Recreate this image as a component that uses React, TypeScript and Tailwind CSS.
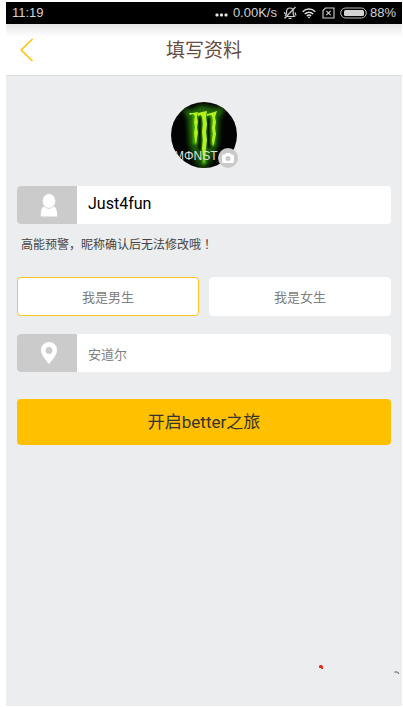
import { useState } from "react";

function StatusBar() {
  return (
    <div className="flex h-[22px] items-center justify-between bg-black px-1.5 font-['Liberation_Sans',Arial,sans-serif] text-[13px] leading-4 text-[#d2d2d2]">
      <span>11:19</span>
      <div className="flex items-center">
        <svg width="13" height="4" viewBox="0 0 13 4" className="mt-1" fill="#e6e6e6">
          <rect x="0.5" y="0.5" width="3" height="3" rx="1" />
          <rect x="5" y="0.5" width="3" height="3" rx="1" />
          <rect x="9.5" y="0.5" width="3" height="3" rx="1" />
        </svg>
        <span className="ml-[5px]">0.00K/s</span>
        <svg width="14" height="14" viewBox="0 0 14 14" className="ml-1.5" fill="none" stroke="#d0d0d0" strokeWidth="1.2">
          <path d="M3.500 10.500h8L10.200 8.500V5.500C10.200 3.300 9 2 7 2 4.800 2 3.600 3.400 3.500 5.500V8L2 10M5.500 12.300h3" />
          <path d="M12.500 1 1.500 12.500" />
          <path d="M1 6.500l1.500 1.500M12 6.500l1 3" />
        </svg>
        <svg width="14" height="12" viewBox="0 0 14 12" className="ml-[5px]" fill="none" stroke="#dadada" strokeWidth="1.5">
          <path d="M0.700 4.700C4.300 1.100 9.700 1.100 13.300 4.700" />
          <path d="M2.800 7c2.400-2.400 6-2.400 8.400 0" />
          <path d="M4.900 9c1.200-1.200 3-1.200 4.200 0" />
          <path d="M5.500 9.700 7 11.400l1.500-1.700Z" fill="#dadada" stroke="none" />
        </svg>
        <svg width="13" height="12" viewBox="0 0 13 12" className="ml-1.5" fill="none" stroke="#d0d0d0" strokeWidth="1.1">
          <path d="M3.500 1h8.500v10H1V3.500Z" />
          <path d="m4.300 3.800 4.400 4.400m0-4.400-4.400 4.400" />
        </svg>
        <svg width="27" height="12" viewBox="0 0 27 12" className="ml-[5px]">
          <rect x="0.700" y="1" width="25.600" height="10" rx="5" fill="none" stroke="#bdbdbd" />
          <rect x="4" y="3" width="20" height="6" rx="1.500" fill="#d4d4d4" />
        </svg>
        <span className="ml-[3px]">88%</span>
      </div>
    </div>
  );
}

function Avatar() {
  return (
    <button type="button" aria-label="更换头像" className="relative block size-[66px]">
      <svg width="66" height="66" viewBox="0 0 66 66">
        <defs>
          <clipPath id="round"><circle cx="33" cy="33" r="33" /></clipPath>
          <linearGradient id="beam" x1="0" y1="0" x2="0" y2="1">
            <stop offset="0" stopColor="#2c8208" />
            <stop offset="0.350" stopColor="#2a8a0a" />
            <stop offset="1" stopColor="#184f06" />
          </linearGradient>
          <filter id="haze" x="-30%" y="-30%" width="160%" height="160%"><feGaussianBlur stdDeviation="2.500" /></filter>
          <filter id="soft" x="-60%" y="-30%" width="220%" height="160%"><feGaussianBlur stdDeviation="1.200" /></filter>
        </defs>
        <g clipPath="url(#round)">
          <rect width="66" height="66" fill="#030303" />
          <path d="M11 6 21 8 30 3 44 6 55 5 48 17 47 42 40 60 32 70 24 60 18 42 17 17Z" fill="url(#beam)" opacity="0.800" filter="url(#haze)" />
          <path d="M29 16V48M37.500 16V46" stroke="#051103" strokeWidth="3.500" filter="url(#soft)" />
          <path d="M24 11V42M33 11V62M42 11V43" fill="none" stroke="#48b40a" strokeWidth="4" filter="url(#soft)" />
          <g fill="#b4f01c">
            <path d="M18 11h4l5-1-1 5 1 5-1 5 1 6-1 5-1 7-1-5-1-7 1-6-1-5 1-6-2-2-3 1Z" />
            <path d="M27 11l4-1 5-1-1 6 1 7-1 8 1 8-1 8-1 8-1 7-1-7-1-8 1-8-1-8 1-8-1-7-1-2-3 1Z" />
            <path d="M36 12l4-1 6-2-2 6 1 5-1 6 1 6-1 5-2 8-1-7 1-6-1-6 1-7-1-5-2-1-3 1Z" />
          </g>
          <text x="3" y="58" fontSize="12" fontFamily="Liberation Sans, sans-serif" fill="#dfe2dc">MΦNST</text>
        </g>
      </svg>
      <span className="absolute -right-px bottom-0 flex size-5 items-center justify-center rounded-full bg-[#c9c9c9]">
        <svg width="12" height="10" viewBox="0 0 12 10">
          <path fill="#fff" fillRule="evenodd" d="M1.500 1.500H3L4 0h4l1 1.500h1.500A1.500 1.500 0 0 1 12 3v5.500A1.500 1.500 0 0 1 10.500 10h-9A1.500 1.500 0 0 1 0 8.500V3a1.500 1.500 0 0 1 1.500-1.500ZM6 3a2.500 2.500 0 1 0 0 5 2.500 2.500 0 0 0 0-5Z" />
        </svg>
      </span>
    </button>
  );
}

function PersonIcon() {
  return (
    <svg width="18" height="24" viewBox="0 0 18 24" fill="#fff">
      <ellipse cx="9" cy="8" rx="6.300" ry="7" />
      <path d="M4.500 13.500C2 14.300.8 16 .8 23.500h16.400c0-7.500-1.200-9.200-3.700-10-2.300 3-6.700 3-9 0Z" />
    </svg>
  );
}

function PinIcon() {
  return (
    <svg width="18" height="24" viewBox="0 0 18 24">
      <path fill="#fff" fillRule="evenodd" d="M9 1a8 8 0 0 0-8 8c0 5.500 5 10 8 14 3-4 8-8.500 8-14a8 8 0 0 0-8-8Zm0 5a3.400 3.400 0 1 1 0 6.800A3.400 3.400 0 0 1 9 6Z" />
    </svg>
  );
}

const genders = ["我是男生", "我是女生"];

export default function App() {
  const [name, setName] = useState("Just4fun");
  const [gender, setGender] = useState(genders[0]);

  return (
    <div className="min-h-screen bg-white pt-0.5 pr-px pb-px pl-1.5 font-[Roboto,'Noto_Sans_CJK_SC',sans-serif]">
      <div className="flex min-h-[calc(100vh-3px)] flex-col bg-[#ebedef]">
        <StatusBar />
        <header className="grid h-[52px] grid-cols-[44px_1fr_44px] items-center border-b border-[#d9dbdd] bg-linear-to-b from-[#e6e6e6] to-white to-[13px]">
          <button type="button" aria-label="返回" className="flex h-full items-center pl-3.5">
            <svg width="14" height="24" viewBox="0 0 14 24" fill="none" stroke="#ffc000" strokeWidth="1.500">
              <path d="M12.500 1 1.200 12l11.300 11" />
            </svg>
          </button>
          <h1 className="pt-0.5 text-center text-[19px] leading-6 text-[#654b40]">填写资料</h1>
        </header>

        <main className="grow px-[11px] pt-[26px]">
          <form onSubmit={(e) => e.preventDefault()}>
            <div className="flex justify-center">
              <Avatar />
            </div>

            <div className="mt-[18px] flex h-[38px] overflow-hidden rounded-[4px] bg-white">
              <label htmlFor="nickname" aria-label="昵称" className="flex w-[60px] shrink-0 items-center justify-center bg-[#cbcbcb] pl-1">
                <PersonIcon />
              </label>
              <input
                id="nickname"
                value={name}
                onChange={(e) => setName(e.target.value)}
                className="min-w-0 grow px-[11px] pb-0.5 text-base text-black outline-none"
              />
            </div>
            <p className="mt-[11px] h-[18px] pl-1 text-xs leading-[18px] text-[#444]">
              高能预警，昵称确认后无法修改哦<span className="font-['Noto_Sans_CJK_TC',sans-serif]" lang="zh-TW">！</span>
            </p>

            <fieldset className="mt-6 grid grid-cols-2 gap-2.5">
              {genders.map((g) => (
                <label
                  key={g}
                  className="flex h-[39px] items-center justify-center rounded-[4px] border border-white bg-white pt-0.5 text-[13px] text-[#808080] has-checked:border-[#ffc31f]"
                >
                  <input type="radio" name="gender" checked={gender === g} onChange={() => setGender(g)} className="sr-only" />
                  {g}
                </label>
              ))}
            </fieldset>

            <div className="mt-[18px] flex h-[38px] overflow-hidden rounded-[4px] bg-white">
              <label htmlFor="region" aria-label="地区" className="flex w-[60px] shrink-0 items-center justify-center bg-[#cbcbcb] pl-1">
                <PinIcon />
              </label>
              <select id="region" className="min-w-0 grow appearance-none px-[11px] pt-1 text-[13px] text-[#808080] outline-none">
                <option>安道尔</option>
              </select>
            </div>

            <button type="submit" className="mt-[27px] h-[46px] w-full rounded-[4px] bg-[#ffc000] pt-0.5 text-[17px] text-[#333]">
              开启better之旅
            </button>
          </form>
        </main>

        <div className="flex items-start justify-between pr-0.5 pb-[31px] pl-[312px]" aria-hidden="true">
          <svg width="6" height="5" viewBox="0 0 6 5">
            <path d="M2 0h2l1 2v2H3V3H1V1Z" fill="#e52a20" />
          </svg>
          <svg width="6" height="4" viewBox="0 0 6 4" className="mt-1.5">
            <path d="M0.500 1h3L5 3" fill="none" stroke="#555" />
          </svg>
        </div>
      </div>
    </div>
  );
}
